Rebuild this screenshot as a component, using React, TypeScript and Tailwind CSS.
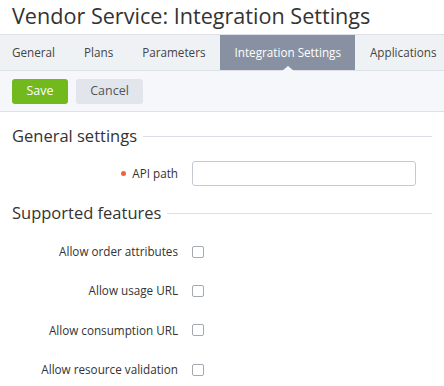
import React from 'react'

const tabs = ['General', 'Plans', 'Parameters', 'Integration Settings', 'Applications']

const features = [
  'Allow order attributes',
  'Allow usage URL',
  'Allow consumption URL',
  'Allow resource validation',
]

function SectionTitle({ title }: { title: string }) {
  return (
    <div className="flex items-center gap-[6px]">
      <h2 className="text-[16.5px] leading-[24px] text-[#333]">{title}</h2>
      <div className="h-px flex-1 bg-[#dcdfe5]" />
    </div>
  )
}

export default function App() {
  return (
    <div className="h-[386px] w-[444px] overflow-hidden bg-white text-[#333]" style={{ fontFamily: '"Open Sans", sans-serif' }}>
      <h1 className="px-3 pt-[0px] text-[21.6px] leading-[32px] text-[#333]">Vendor Service: Integration Settings</h1>

      {/* tabs */}
      <div className="mt-[2px] flex h-[37px] border-y border-[#dde1e7] bg-[#eff2f5] text-[11.7px] whitespace-nowrap">
        {tabs.map((tab) => {
          const active = tab === 'Integration Settings'
          return (
            <div
              key={tab}
              className={
                active
                  ? 'relative flex items-center bg-[#8791a1] px-[14.5px] text-white first:pl-[12px]'
                  : 'flex items-center px-[14.5px] text-[#444] first:pl-[12px]'
              }
            >
              {tab}
              {active && (
                <span className="absolute bottom-[-1px] left-1/2 h-0 w-0 -translate-x-1/2 border-x-[6px] border-b-[5px] border-x-transparent border-b-[#f5f7fa]" />
              )}
            </div>
          )
        })}
      </div>

      {/* toolbar */}
      <div className="flex h-[41px] items-center gap-2 border-b border-[#dde1e7] bg-[#f5f7fa] px-3 text-[12.5px]">
        <button className="h-[25px] w-[56px] rounded-[3px] bg-[#72b91e] text-white">Save</button>
        <button className="h-[25px] w-[67px] rounded-[3px] bg-[#e2e6ec] text-[#555]">Cancel</button>
      </div>

      <div className="px-3 pt-[12px]">
        <SectionTitle title="General settings" />
        <div className="mt-[13px] flex items-center gap-[14px]">
          <label className="flex w-[166px] items-center justify-end gap-[6px] text-[11.7px]">
            <span className="h-[5px] w-[5px] rounded-full bg-[#f0633f]" />
            API path
          </label>
          <input className="h-[25px] w-[224px] rounded-[3px] border border-[#c5cad2] bg-white" />
        </div>

        <div className="mt-[15px]">
          <SectionTitle title="Supported features" />
        </div>

        <div className="mt-[7px] flex flex-col">
          {features.map((f) => (
            <div key={f} className="flex h-[39.4px] items-center gap-[14px]">
              <label className="w-[166px] text-right text-[11.7px]">{f}</label>
              <span className="h-[12px] w-[12px] rounded-[2px] border border-[#a5a9b0] bg-white" />
            </div>
          ))}
        </div>
      </div>
    </div>
  )
}
